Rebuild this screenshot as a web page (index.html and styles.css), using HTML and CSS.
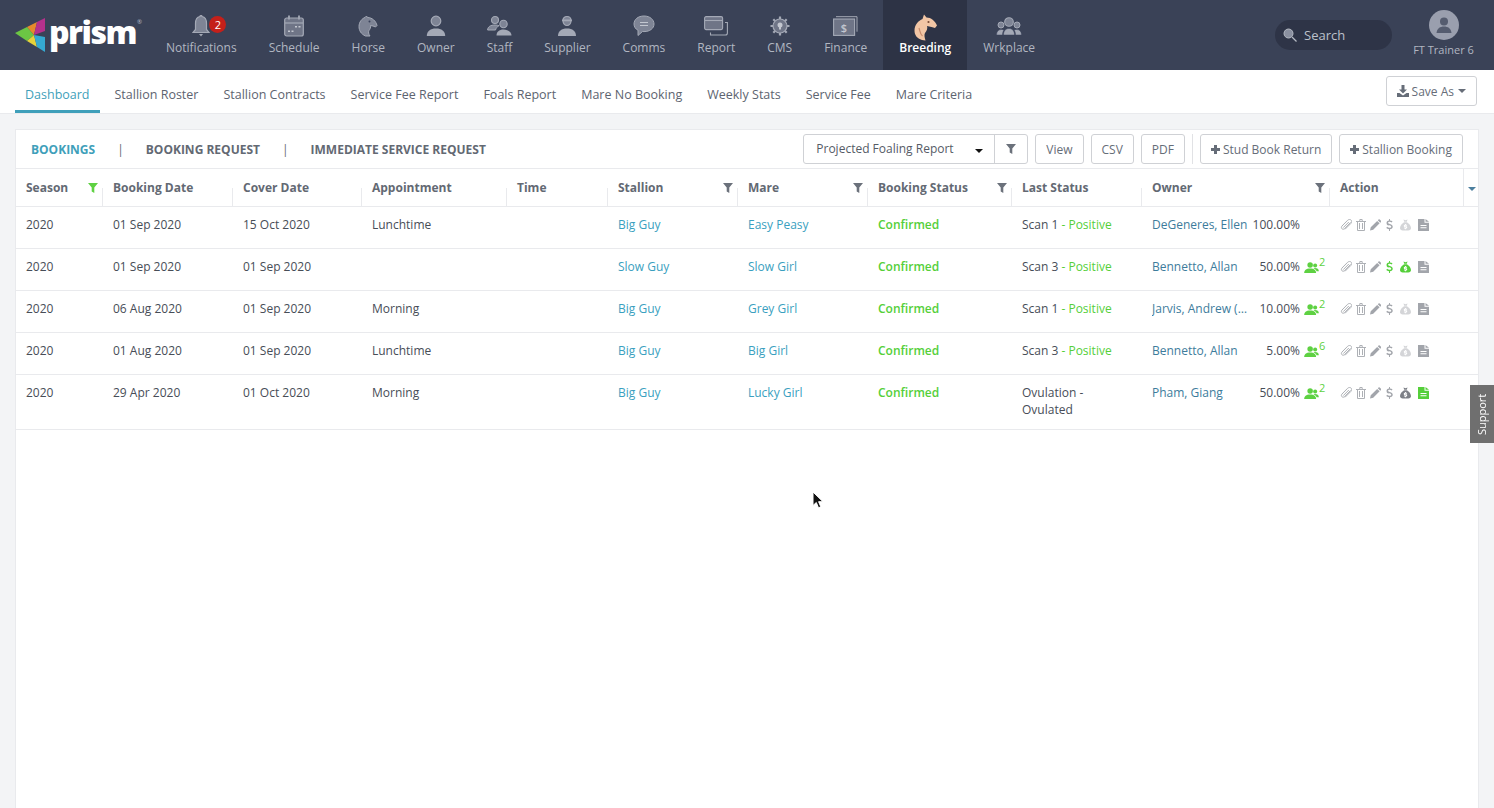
FILE: index.html
```html
<!DOCTYPE html>
<html lang="en">
<head>
    <meta charset="UTF-8">
    <meta name="viewport" content="width=device-width, initial-scale=1.0">
    <title>Prism - Breeding Dashboard</title>
    <link rel="stylesheet" href="styles.css">
</head>
<body>
    <svg class="sprite" width="0" height="0">
        <symbol id="i-filter" viewBox="0 0 10 10"><path d="M0 0h10L6.3 4.6V10L3.7 8.6V4.6z"/></symbol>
        <symbol id="i-clip" viewBox="0 0 12 12"><path d="M10.6 3.4 4.6 9.6c-.8.8-2 .8-2.7.1s-.7-1.9.1-2.7l5.6-5.7c1.2-1.2 2.9-.9 3.5-.2.7.7.9 2.200-.2 3.300L5 10.300" fill="none" stroke="currentColor" stroke-width="1"/><path d="M8.800 3 3.300 8.600" fill="none" stroke="currentColor" stroke-width="1"/></symbol>
        <symbol id="i-trash" viewBox="0 0 10 12"><path d="M0 2h10v1H9v8.300l-.7.700H1.700L1 11.300V3H0zM3.300 2V.7L4 0h2l.7.7V2h-1V1H4.300v1zM2 3v8h6V3zm1 1h1v6H3zm3 0h1v6H6z"/></symbol>
        <symbol id="i-pen" viewBox="0 0 12 12"><path d="M0 12l.8-3.500L7.800 1.500l2.700 2.700-7 7zM8.500.8 9.300 0a1 1 0 0 1 1.300 0L12 1.400a1 1 0 0 1 0 1.300l-.8.800z"/></symbol>
        <symbol id="i-dollar" viewBox="0 0 7 13"><path d="M3 0h1v1.500c1.200.1 2.100.5 2.700 1L6 3.800C5.300 3.300 4.600 3 3.700 3 2.700 3 2 3.400 2 4c0 .7.800 1 2 1.400 1.700.5 3 1.200 3 2.900 0 1.500-1.200 2.500-3 2.700V13H3v-1.900c-1.200-.1-2.300-.6-3-1.300l.9-1.300c.7.600 1.700 1.100 2.700 1.100 1.100 0 1.800-.5 1.800-1.200 0-.8-.8-1.100-2.100-1.500C1.600 7.400.3 6.700.3 4.100.3 2.800 1.300 1.800 3 1.500z"/></symbol>
        <symbol id="i-bag" viewBox="0 0 12 12"><path d="M3.800 0 6 .8 8.200 0 7.400 2.400H4.600zM4.400 3h3.200C10 4.500 12 7 12 9.300 12 11 10.800 12 9 12H3C1.200 12 0 11 0 9.300 0 7 2 4.500 4.400 3z"/><path d="M5.500 5h1v.7h1.200v1H5.600v.6h1.600l.6.6v1.300l-.6.6h-.7v.7h-1v-.7H4.300v-1h2.100V8.200H4.800l-.6-.6V6.300l.6-.6h.7z" fill="#fff"/></symbol>
        <symbol id="i-doc" viewBox="0 0 11 12"><path d="M0 0h6.500v3.800H11V12H0zM7.500 0 11 2.800H7.500z"/><path d="M2.500 6h6v1h-6zm0 2.300h6v1h-6z" fill="#fff"/></symbol>
        <symbol id="i-people" viewBox="0 0 16 12"><circle cx="6.500" cy="3.200" r="3"/><path d="M0 12c0-3 2-5 6.500-5s6.500 2 6.500 5z"/><circle cx="12" cy="3.800" r="2.200"/><path d="M10 6.700c3.500-.7 6 .6 6 3.300h-2.500C13 8.500 11.800 7.400 10 6.700z"/></symbol>
    </svg>

    <header class="topbar">
        <div class="logo">
            <svg class="logo-mark" viewBox="15 17 32 36">
                <polygon points="15,33 27,27 34,35 27,41" fill="#6cc644"/>
                <polygon points="27,27 37,22 34,35" fill="#e58a2c"/>
                <polygon points="37,22 45,18 45,31 34,35" fill="#b5318c"/>
                <polygon points="27,41 34,35 37,47" fill="#e6d23a"/>
                <polygon points="34,35 45,37 45,52 37,47" fill="#35a9d1"/>
            </svg>
            <span class="logo-text">prism<sup>®</sup></span>
        </div>

        <nav class="main-nav">
            <a class="nav-item">
                <span class="nav-icon">
                    <svg width="18" height="22" viewBox="0 0 18 22"><path d="M8 1.500a1 1 0 0 1 2 0C13 2 14.500 5 14.500 8.500v6l2.500 3H1l2.500-3v-6C3.500 5 5 2 8 1.500z" fill="#7e8495" stroke="#a4a9b6" stroke-width="1.200"/><path d="M7 19h4l-2 2.500z" fill="#a4a9b6"/></svg>
                    <span class="badge">2</span>
                </span>
                Notifications
            </a>
            <a class="nav-item">
                <span class="nav-icon">
                    <svg width="20" height="22" viewBox="0 0 20 22"><rect x=".7" y="3" width="18.600" height="18" rx="2" fill="#6f7587" stroke="#a4a9b6" stroke-width="1.200"/><path d="M1 8h18" stroke="#a4a9b6" stroke-width="1.200"/><path d="M5 .5v4M15 .5v4" stroke="#a4a9b6" stroke-width="1.800"/><path d="M11 11h2v1.500h-2zM14.500 11h2v1.500h-2zM4 15.500h2V17H4zM7.500 15.500h2V17h-2z" fill="#c3c7d0"/></svg>
                </span>
                Schedule
            </a>
            <a class="nav-item">
                <span class="nav-icon">
                    <svg width="20" height="22" viewBox="0 0 20 22"><path d="M7.500 21C3 19 1 15.500 1 11.500 1 7 4 3.500 7 2.500L8.500 1l1 1.500C14 2.500 18 6 19 10.500l-1.500 1.500-2.500-1-2.500-.5c.5 2-.5 3.500-1.500 5-.8 1.400-.5 3.500 1 5.500z" fill="#7e8495" stroke="#a4a9b6" stroke-width="1"/><circle cx="11.500" cy="6.500" r="1" fill="#39415a"/></svg>
                </span>
                Horse
            </a>
            <a class="nav-item">
                <span class="nav-icon">
                    <svg width="20" height="22" viewBox="0 0 20 22"><circle cx="10" cy="6" r="4.800" fill="#7e8495" stroke="#a4a9b6" stroke-width="1.200"/><path d="M.8 21c0-5 3.700-7.500 9.200-7.500s9.200 2.500 9.200 7.500z" fill="#a4a9b6"/></svg>
                </span>
                Owner
            </a>
            <a class="nav-item">
                <span class="nav-icon">
                    <svg width="25" height="22" viewBox="0 0 25 22"><circle cx="8" cy="5" r="3.500" fill="#7e8495" stroke="#a4a9b6" stroke-width="1.100"/><path d="M.6 15c.2-3.400 3-5 7.400-5 1.600 0 3 .2 4 .7-1.800 1-3 2.400-3.500 4.300z" fill="#7e8495" stroke="#a4a9b6" stroke-width="1"/><circle cx="16.500" cy="9" r="3.700" fill="#7e8495" stroke="#a4a9b6" stroke-width="1.100"/><path d="M9.500 20.500c0-3.600 2.600-6 7-6s8 2.400 8 6z" fill="#a4a9b6"/></svg>
                </span>
                Staff
            </a>
            <a class="nav-item">
                <span class="nav-icon">
                    <svg width="20" height="22" viewBox="0 0 20 22"><path d="M6 5.500C6 3 7.700 1.500 10 1.500S14 3 14 5.500c0 2.800-1.800 5-4 5s-4-2.200-4-5z" fill="#7e8495" stroke="#a4a9b6" stroke-width="1.200"/><path d="M5 4.500h10v1.800H5z" fill="#a4a9b6"/><path d="M1 21c0-5 3.500-7.500 9-7.500s9 2.500 9 7.500z" fill="#a4a9b6"/></svg>
                </span>
                Supplier
            </a>
            <a class="nav-item">
                <span class="nav-icon">
                    <svg width="22" height="22" viewBox="0 0 22 22"><path d="M11 1C5 1 1 4.500 1 9c0 2.700 1.500 5 4 6.300V20.500l4.500-4c.5.100 1 .100 1.500.100 6 0 10-3.300 10-7.600S17 1 11 1z" fill="#7e8495" stroke="#a4a9b6" stroke-width="1"/><path d="M7 7.500h8M7 10.500h8" stroke="#c3c7d0" stroke-width="1.200"/></svg>
                </span>
                Comms
            </a>
            <a class="nav-item">
                <span class="nav-icon">
                    <svg width="24" height="20" viewBox="0 0 24 20"><rect x=".6" y=".6" width="18" height="13" rx="1.500" fill="#6f7587" stroke="#a4a9b6" stroke-width="1.100"/><path d="M1 4.500h17.500" stroke="#a4a9b6" stroke-width="1.100"/><path d="M21 6.500h2.400V17a2 2 0 0 1-2 2H6.500v-2.500" fill="none" stroke="#a4a9b6" stroke-width="1.100"/></svg>
                </span>
                Report
            </a>
            <a class="nav-item">
                <span class="nav-icon">
                    <svg width="20" height="20" viewBox="0 0 20 20"><circle cx="10" cy="10" r="7" fill="#6f7587" stroke="#a4a9b6" stroke-width="1.200"/><path d="M10 .5V3M10 17v2.500M.5 10H3M17 10h2.500M3.300 3.300 5 5M15 15l1.700 1.700M16.700 3.300 15 5M5 15l-1.700 1.700" stroke="#a4a9b6" stroke-width="2.200"/><circle cx="10" cy="9" r="2.500" fill="#c3c7d0"/><path d="M9 10h2v3.500H9z" fill="#c3c7d0"/></svg>
                </span>
                CMS
            </a>
            <a class="nav-item">
                <span class="nav-icon">
                    <svg width="25" height="20" viewBox="0 0 25 20"><rect x=".6" y="3" width="21" height="16.400" fill="#6f7587" stroke="#a4a9b6" stroke-width="1.100"/><path d="M3 .7h21v15" fill="none" stroke="#a4a9b6" stroke-width="1"/><text x="11" y="15.500" class="finance-sign">$</text></svg>
                </span>
                Finance
            </a>
            <a class="nav-item is-active">
                <span class="nav-icon">
                    <svg class="breeding-icon" width="25" height="28" viewBox="0 0 25 28"><path d="M9 27C4 25.500 1.500 22 1.500 17.500 1.500 12 5.500 7.500 9.500 6L11 1.500l2.500 3C18 4.500 22 8 24 12.500l-2 2.500-3.500-1-4.500-1c1 2.500-.5 5-2 7-1 1.600-.5 4.500.5 7.500z" fill="#f2c6a5"/><path d="M6 15c1 3 1 6 3.500 8" fill="none" stroke="#c98c6c" stroke-width="1.200"/><circle cx="15.500" cy="9" r="1.100" fill="#7a4c35"/></svg>
                </span>
                Breeding
            </a>
            <a class="nav-item">
                <span class="nav-icon">
                    <svg width="26" height="20" viewBox="0 0 26 20"><circle cx="13" cy="6" r="4.300" fill="#7e8495" stroke="#a4a9b6" stroke-width="1.100"/><circle cx="5" cy="9" r="3" fill="#7e8495" stroke="#a4a9b6" stroke-width="1"/><circle cx="21" cy="9" r="3" fill="#7e8495" stroke="#a4a9b6" stroke-width="1"/><path d="M.5 19c0-3.500 1.800-5.500 5-5.500 1 0 1.800.2 2.500.5-1 1.300-1.500 3-1.500 5zM25.500 19c0-3.500-1.800-5.500-5-5.500-1 0-1.800.2-2.500.5 1 1.300 1.500 3 1.500 5zM7.500 19c0-4 2-6.500 5.500-6.500s5.500 2.500 5.500 6.500z" fill="#a4a9b6" stroke="#39415a" stroke-width=".5"/></svg>
                </span>
                Wrkplace
            </a>
        </nav>

        <div class="search">
            <svg width="14" height="14" viewBox="0 0 14 14"><circle cx="5.500" cy="5.500" r="4.500" fill="#8a90a0" stroke="#b5bac4"/><path d="M9 9l4.500 4.500" stroke="#b5bac4" stroke-width="1.200"/></svg>
            Search
        </div>
        <div class="user">
            <svg width="30" height="30" viewBox="0 0 30 30"><circle cx="15" cy="15" r="15" fill="#9a9fae"/><circle cx="15" cy="11.500" r="4" fill="#555c6f"/><path d="M7.500 23c.5-4.500 3.500-6.500 7.500-6.500s7 2 7.500 6.500z" fill="#555c6f"/></svg>
            <span>FT Trainer 6</span>
        </div>
    </header>

    <div class="subnav">
        <a class="subnav-link is-active">Dashboard</a>
        <a class="subnav-link">Stallion Roster</a>
        <a class="subnav-link">Stallion Contracts</a>
        <a class="subnav-link">Service Fee Report</a>
        <a class="subnav-link">Foals Report</a>
        <a class="subnav-link">Mare No Booking</a>
        <a class="subnav-link">Weekly Stats</a>
        <a class="subnav-link">Service Fee</a>
        <a class="subnav-link">Mare Criteria</a>
        <button type="button" class="btn save-as">
            <svg width="12" height="12" viewBox="0 0 12 12"><path d="M4.500 0h3v4.500H10L6 8.500l-4-4h2.500zM0 8h2.500L6 10.500 9.500 8H12v4H0z" fill="#666d78"/></svg>
            Save As <span class="caret"></span>
        </button>
    </div>

    <main class="content">
        <section class="card">
            <div class="toolbar">
                <a class="tab is-active">Bookings</a>
                <span class="tab-sep">|</span>
                <a class="tab">Booking Request</a>
                <span class="tab-sep">|</span>
                <a class="tab">Immediate Service Request</a>

                <div class="toolbar-actions">
                    <div class="report-select">
                        <span class="report-name">Projected Foaling Report <span class="caret caret-dark"></span></span>
                        <span class="report-filter"><svg class="filter"><use href="#i-filter"/></svg></span>
                    </div>
                    <button type="button" class="btn">View</button>
                    <button type="button" class="btn">CSV</button>
                    <button type="button" class="btn">PDF</button>
                    <span class="toolbar-sep"></span>
                    <button type="button" class="btn"><span class="plus"></span>Stud Book Return</button>
                    <button type="button" class="btn"><span class="plus"></span>Stallion Booking</button>
                </div>
            </div>

            <table class="bookings">
                <colgroup>
                    <col class="col-season"><col class="col-booking"><col class="col-cover"><col class="col-appt">
                    <col class="col-time"><col class="col-stallion"><col class="col-mare"><col class="col-status">
                    <col class="col-last"><col class="col-owner"><col class="col-action"><col class="col-more">
                </colgroup>
                <thead>
                    <tr>
                        <th><div class="th-in">Season <svg class="filter filter-on"><use href="#i-filter"/></svg></div></th>
                        <th><div class="th-in">Booking Date</div></th>
                        <th><div class="th-in">Cover Date</div></th>
                        <th><div class="th-in">Appointment</div></th>
                        <th><div class="th-in">Time</div></th>
                        <th><div class="th-in">Stallion <svg class="filter"><use href="#i-filter"/></svg></div></th>
                        <th><div class="th-in">Mare <svg class="filter"><use href="#i-filter"/></svg></div></th>
                        <th><div class="th-in">Booking Status <svg class="filter"><use href="#i-filter"/></svg></div></th>
                        <th><div class="th-in">Last Status</div></th>
                        <th><div class="th-in">Owner <svg class="filter"><use href="#i-filter"/></svg></div></th>
                        <th class="th-action"><div class="th-in">Action</div></th>
                        <th class="th-more"><span class="caret caret-blue"></span></th>
                    </tr>
                </thead>
                <tbody>
                    <tr>
                        <td>2020</td><td>01 Sep 2020</td><td>15 Oct 2020</td><td>Lunchtime</td><td></td>
                        <td><a class="link">Big Guy</a></td><td><a class="link">Easy Peasy</a></td>
                        <td class="green">Confirmed</td>
                        <td>Scan 1 <span class="green">- Positive</span></td>
                        <td><div class="owner"><a class="owner-name">DeGeneres, Ellen</a><span class="pct">100.00%</span></div></td>
                        <td colspan="2">
                            <div class="actions">
                                <svg class="a-clip"><use href="#i-clip"/></svg><svg class="a-trash"><use href="#i-trash"/></svg><svg class="a-pen"><use href="#i-pen"/></svg><svg class="a-dollar"><use href="#i-dollar"/></svg><svg class="a-bag"><use href="#i-bag"/></svg><svg class="a-doc"><use href="#i-doc"/></svg>
                            </div>
                        </td>
                    </tr>
                    <tr>
                        <td>2020</td><td>01 Sep 2020</td><td>01 Sep 2020</td><td></td><td></td>
                        <td><a class="link">Slow Guy</a></td><td><a class="link">Slow Girl</a></td>
                        <td class="green">Confirmed</td>
                        <td>Scan 3 <span class="green">- Positive</span></td>
                        <td><div class="owner"><a class="owner-name">Bennetto, Allan</a><span class="pct">50.00%</span><span class="people"><svg><use href="#i-people"/></svg><sup>2</sup></span></div></td>
                        <td colspan="2">
                            <div class="actions">
                                <svg class="a-clip"><use href="#i-clip"/></svg><svg class="a-trash"><use href="#i-trash"/></svg><svg class="a-pen"><use href="#i-pen"/></svg><svg class="a-dollar is-green"><use href="#i-dollar"/></svg><svg class="a-bag is-green"><use href="#i-bag"/></svg><svg class="a-doc"><use href="#i-doc"/></svg>
                            </div>
                        </td>
                    </tr>
                    <tr>
                        <td>2020</td><td>06 Aug 2020</td><td>01 Sep 2020</td><td>Morning</td><td></td>
                        <td><a class="link">Big Guy</a></td><td><a class="link">Grey Girl</a></td>
                        <td class="green">Confirmed</td>
                        <td>Scan 1 <span class="green">- Positive</span></td>
                        <td><div class="owner"><a class="owner-name">Jarvis, Andrew (Andy)</a><span class="pct">10.00%</span><span class="people"><svg><use href="#i-people"/></svg><sup>2</sup></span></div></td>
                        <td colspan="2">
                            <div class="actions">
                                <svg class="a-clip"><use href="#i-clip"/></svg><svg class="a-trash"><use href="#i-trash"/></svg><svg class="a-pen"><use href="#i-pen"/></svg><svg class="a-dollar"><use href="#i-dollar"/></svg><svg class="a-bag"><use href="#i-bag"/></svg><svg class="a-doc"><use href="#i-doc"/></svg>
                            </div>
                        </td>
                    </tr>
                    <tr>
                        <td>2020</td><td>01 Aug 2020</td><td>01 Sep 2020</td><td>Lunchtime</td><td></td>
                        <td><a class="link">Big Guy</a></td><td><a class="link">Big Girl</a></td>
                        <td class="green">Confirmed</td>
                        <td>Scan 3 <span class="green">- Positive</span></td>
                        <td><div class="owner"><a class="owner-name">Bennetto, Allan</a><span class="pct">5.00%</span><span class="people"><svg><use href="#i-people"/></svg><sup>6</sup></span></div></td>
                        <td colspan="2">
                            <div class="actions">
                                <svg class="a-clip"><use href="#i-clip"/></svg><svg class="a-trash"><use href="#i-trash"/></svg><svg class="a-pen"><use href="#i-pen"/></svg><svg class="a-dollar"><use href="#i-dollar"/></svg><svg class="a-bag"><use href="#i-bag"/></svg><svg class="a-doc"><use href="#i-doc"/></svg>
                            </div>
                        </td>
                    </tr>
                    <tr>
                        <td>2020</td><td>29 Apr 2020</td><td>01 Oct 2020</td><td>Morning</td><td></td>
                        <td><a class="link">Big Guy</a></td><td><a class="link">Lucky Girl</a></td>
                        <td class="green">Confirmed</td>
                        <td>Ovulation - Ovulated</td>
                        <td><div class="owner"><a class="owner-name">Pham, Giang</a><span class="pct">50.00%</span><span class="people"><svg><use href="#i-people"/></svg><sup>2</sup></span></div></td>
                        <td colspan="2">
                            <div class="actions">
                                <svg class="a-clip"><use href="#i-clip"/></svg><svg class="a-trash"><use href="#i-trash"/></svg><svg class="a-pen"><use href="#i-pen"/></svg><svg class="a-dollar"><use href="#i-dollar"/></svg><svg class="a-bag is-dark"><use href="#i-bag"/></svg><svg class="a-doc is-green"><use href="#i-doc"/></svg>
                            </div>
                        </td>
                    </tr>
                </tbody>
            </table>
        </section>
    </main>

    <a class="support">Support</a>

    <svg class="cursor" width="12" height="18" viewBox="0 0 12 18"><path d="M1 1v13.500l3.300-3 2.200 5.300 2.300-1-2.200-5.100h4.400z" fill="#111" stroke="#fff" stroke-width="1"/></svg>
</body>
</html>
```

FILE: styles.css
```css
* {
    box-sizing: border-box;
}

html, body {
    height: 100%;
}

body {
    display: flex;
    flex-direction: column;
    height: 100vh;
    margin: 0;
    overflow: hidden;
    background-color: #f3f4f6;
    color: #474d57;
    font-family: "Open Sans", "Liberation Sans", sans-serif;
    font-size: 12px;
}

.sprite {
    position: absolute;
}

/* top bar */
.topbar {
    display: flex;
    flex: 0 0 70px;
    align-items: stretch;
    background-color: #3a4257;
}

.logo {
    display: flex;
    flex: 0 0 150px;
    align-items: center;
    gap: 2px;
    padding-left: 15px;
}

.logo-mark {
    flex: 0 0 32px;
    width: 32px;
    height: 36px;
    margin-top: 0;
}

.logo-text {
    margin-top: -7px;
    color: #fff;
    font-size: 32px;
    font-weight: 800;
    letter-spacing: -1.5px;
    line-height: 36px;
}

.logo-text sup {
    margin-left: 1px;
    color: #b9bdc6;
    font-size: 6px;
    font-weight: 400;
    letter-spacing: 0;
    vertical-align: 20px;
    line-height: 0;
}

.main-nav {
    display: flex;
    flex: 1;
}

.nav-item {
    display: flex;
    flex-direction: column;
    align-items: center;
    padding: 14px 16px 0;
    color: #b1b6c1;
    line-height: 17px;
    white-space: nowrap;
}

.nav-item.is-active {
    background-color: #2d3345;
    color: #fff;
    font-weight: 600;
}

.nav-icon {
    position: relative;
    display: flex;
    align-items: center;
    justify-content: center;
    height: 24px;
    margin-bottom: 1px;
}

.breeding-icon {
    margin-top: 2px;
}

.finance-sign {
    fill: #c3c7d0;
    font-size: 11px;
    font-weight: 600;
    text-anchor: middle;
}

.badge {
    position: absolute;
    top: 2px;
    left: 17px;
    width: 17px;
    height: 17px;
    border-radius: 50%;
    background-color: #c4201a;
    color: #fff;
    font-size: 11px;
    line-height: 17px;
    text-align: center;
}

.search {
    display: flex;
    flex: 0 0 117px;
    align-items: center;
    gap: 7px;
    height: 30px;
    margin: 20px 21px 0 0;
    padding-left: 8px;
    border-radius: 15px;
    background-color: #2e3447;
    color: #bcc1cb;
    font-size: 13px;
}

.user {
    display: flex;
    flex: 0 0 61px;
    flex-direction: column;
    align-items: center;
    margin-right: 20px;
    padding-top: 10px;
    color: #b1b6c1;
    font-size: 11px;
    line-height: 18px;
    white-space: nowrap;
}

.user svg {
    margin-bottom: 1px;
}

/* second row of links */
.subnav {
    display: flex;
    flex: 0 0 44px;
    gap: 5px;
    align-items: stretch;
    padding: 0 17px 0 15px;
    border-bottom: 1px solid #e9eaed;
    background-color: #fff;
}

.subnav-link {
    height: 43px;
    padding: 0 10px;
    color: #5d6470;
    font-size: 12.500px;
    line-height: 49px;
    white-space: nowrap;
}

.subnav-link.is-active {
    border-bottom: 3px solid #3f9fba;
    color: #3f9fba;
}

.btn {
    height: 30px;
    padding: 0 10px;
    border: 1px solid #cfd1d5;
    border-radius: 3px;
    background-color: #fff;
    color: #666d78;
    font-family: inherit;
    font-size: 12px;
    white-space: nowrap;
}

.save-as {
    display: flex;
    align-items: center;
    gap: 3px;
    margin: 6px 0 0 auto;
}

.caret {
    display: inline-block;
    width: 0;
    height: 0;
    margin-left: 1px;
    border-top: 4px solid #666d78;
    border-right: 4px solid transparent;
    border-left: 4px solid transparent;
    vertical-align: middle;
}

.caret-dark {
    position: absolute;
    top: 14px;
    right: 11px;
    border-top-color: #111;
}

.caret-blue {
    border-top-color: #4c7f9e;
}

/* card */
.content {
    display: flex;
    flex: 1;
    min-height: 0;
    padding: 15px 16px 0 15px;
}

.card {
    flex: 1;
    border: 1px solid #e9eaed;
    border-bottom: 0;
    background-color: #fff;
}

.toolbar {
    display: flex;
    align-items: center;
    height: 39px;
    padding-left: 15px;
    border-bottom: 1px solid #e9eaed;
}

.tab {
    color: #636973;
    font-weight: 700;
    text-transform: uppercase;
    white-space: nowrap;
}

.tab.is-active {
    color: #3f9fba;
}

.tab-sep {
    margin: 0 22px;
    color: #636973;
}

.toolbar-actions {
    display: flex;
    align-items: center;
    gap: 7px;
    margin-left: auto;
    padding-right: 15px;
}

.toolbar-actions .btn {
    padding: 0 10px;
}

.report-select {
    display: flex;
    width: 225px;
    height: 30px;
    border: 1px solid #cfd1d5;
    border-radius: 3px;
}

.report-name {
    position: relative;
    flex: 1;
    padding-left: 12px;
    color: #555b66;
    line-height: 28px;
}

.report-filter {
    display: flex;
    flex: 0 0 33px;
    align-items: center;
    justify-content: center;
    border-left: 1px solid #cfd1d5;
}

.toolbar-sep {
    width: 1px;
    height: 30px;
    background-color: #e1e2e5;
}

.plus {
    position: relative;
    display: inline-block;
    width: 9px;
    height: 9px;
    margin-right: 3px;
    background: linear-gradient(#666d78, #666d78) center / 100% 3px no-repeat,
                linear-gradient(#666d78, #666d78) center / 3px 100% no-repeat;
}

/* table */
.bookings {
    width: 100%;
    border-collapse: separate;
    border-spacing: 0;
    table-layout: fixed;
}

.col-season { width: 87px; }
.col-booking { width: 130px; }
.col-cover { width: 129px; }
.col-appt { width: 145px; }
.col-time { width: 101px; }
.col-stallion { width: 130px; }
.col-mare { width: 130px; }
.col-status { width: 144px; }
.col-last { width: 130px; }
.col-owner { width: 188px; }
.col-action { width: 133px; }
.col-more { width: 15px; }

.bookings th {
    position: relative;
    height: 38px;
    padding: 0 5px 0 10px;
    border-bottom: 1px solid #e9eaed;
    color: #636973;
    font-weight: 700;
    text-align: left;
}

.bookings th::after {
    content: "";
    position: absolute;
    top: 19px;
    right: 0;
    bottom: 0;
    width: 1px;
    background-color: #e9eaed;
}

.bookings .th-action::after,
.bookings .th-more::after {
    display: none;
}

.bookings .th-more {
    padding: 0 0 0 3px;
    border-left: 1px solid #e9eaed;
}

.th-in {
    display: flex;
    align-items: center;
    justify-content: space-between;
}

.filter {
    flex: none;
    width: 10px;
    height: 10px;
    fill: #6b717b;
}

.filter-on {
    fill: #5ed142;
}

.bookings td {
    height: 42px;
    padding: 9px 10px 0;
    border-bottom: 1px solid #e9eaed;
    line-height: 17px;
    vertical-align: top;
}

.bookings tbody tr:last-child td {
    height: 55px;
}

.green {
    color: #55cf3a;
}

.bookings td.green {
    font-weight: 600;
}

.link {
    color: #3a9fc0;
}

.owner {
    display: flex;
    align-items: flex-start;
    height: 17px;
    white-space: nowrap;
}

.owner-name {
    flex: 0 0 96px;
    overflow: hidden;
    color: #3d7c9c;
    text-overflow: ellipsis;
}

.pct {
    flex: 0 0 52px;
    text-align: right;
}

.people {
    display: flex;
    margin-left: 4px;
    color: #5ed142;
}

.people svg {
    width: 15px;
    height: 11px;
    margin-top: 4px;
    fill: currentColor;
}

.people sup {
    margin-top: -3px;
    font-size: 11px;
    line-height: 14px;
    vertical-align: baseline;
}

.actions {
    display: flex;
    align-items: center;
    height: 17px;
    color: #adb0b5;
}

.actions svg {
    height: 12px;
    fill: currentColor;
}

.a-clip { width: 12px; }

.a-trash {
    width: 10px;
    margin-left: 4px;
}

.a-pen {
    width: 11px;
    margin-left: 4px;
    color: #a2a5ab;
}

.a-dollar {
    width: 7px;
    margin-left: 5px;
    color: #a2a5ab;
}

.a-bag {
    width: 11px;
    margin-left: 7px;
    color: #d4d5d8;
}

.a-doc {
    width: 11px;
    margin-left: 7px;
    color: #a2a5ab;
}

.actions .is-green {
    color: #55cf3a;
}

.actions .is-dark {
    color: #7d8087;
}

/* floats over the page */
.support {
    position: fixed;
    top: 385px;
    right: 0;
    width: 24px;
    height: 58px;
    background-color: #6f6f6f;
    color: #fff;
    font-size: 11px;
    line-height: 24px;
    text-align: center;
    transform: rotate(180deg);
    writing-mode: vertical-rl;
}

.cursor {
    position: fixed;
    top: 491px;
    left: 812px;
}
```
